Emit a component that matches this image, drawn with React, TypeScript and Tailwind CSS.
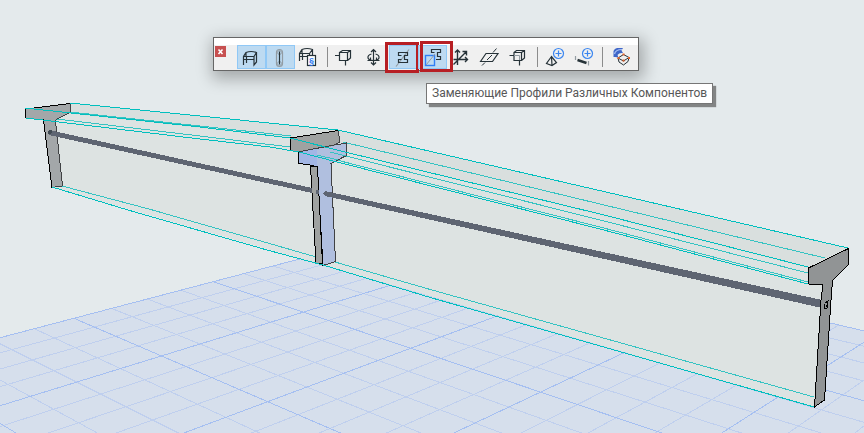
import { ReactNode } from "react";

interface ToolButtonProps {
  label: string;
  selected?: boolean;
  markClass?: string;
  children: ReactNode;
}

// Floor plane: one unit is a bold grid cell, split into four minor cells
const project = (u: number, v: number) => {
  const w = 1 + 0.10988 * u - 0.08878 * v;
  const x = (162.74 * u + 73.085 * v + 74) / w;
  const y = (-5.65 * u + 6.035 * v + 318.3) / w;
  return `${x.toFixed(1)} ${y.toFixed(1)}`;
};

const FLOOR = { uMin: -2, uMax: 3, vMin: 0, vMax: 6 };

const gridPath = (bold: boolean) => {
  const parts: string[] = [];
  for (let i = FLOOR.uMin * 4; i <= FLOOR.uMax * 4; i++) {
    if ((i % 4 === 0) === bold) {
      parts.push(`M${project(i / 4, FLOOR.vMin)}L${project(i / 4, FLOOR.vMax)}`);
    }
  }
  for (let i = FLOOR.vMin * 4; i <= FLOOR.vMax * 4; i++) {
    if ((i % 4 === 0) === bold) {
      parts.push(`M${project(FLOOR.uMin, i / 4)}L${project(FLOOR.uMax, i / 4)}`);
    }
  }
  return parts.join("");
};

const floorPath = `M${project(-2, 0)}L${project(3, 0)}L${project(3, 6)}L${project(-2, 6)}Z`;

const Scene = () => (
  <svg
    className="block h-auto w-full"
    viewBox="0 0 864 433"
    fill="none"
    shapeRendering="crispEdges"
    role="img"
    aria-label="3D"
  >
    <path d={floorPath} fill="#d6dfec" />
    <path d={gridPath(false)} stroke="#bfcfee" />
    <path d={gridPath(true)} stroke="#a5bff1" />

    {/* beam body */}
    <path d="M26 109L70 103L338 130L848 248L824 300L814 407L323 265L52 187L44 120L26 118Z" fill="#dde3e2" />
    <path d="M26 109L70 103L338 130L848 248L808 268L345 152L290 138Z" fill="#d9dfde" />
    <g stroke="#35c3c2">
      <path d="M70 112L200 126L291 136" />
      <path d="M57 119L200 136L298 148" />
      <path d="M62 186L149 209L292 250L316 257" />
      <path d="M343 142L600 204L825 258" />
      <path d="M330 152L600 220L808 273" />
      <path d="M317 155L600 227L808 282" />
      <path d="M335 262L432 290L814 397" />
    </g>

    {/* left section */}
    <path d="M25.500 109L70.500 103.500L71 112L57 119L55.500 121L62.500 186L52 187.500L43.500 120L26 118Z" fill="#a3a7a9" />
    <path d="M70.500 103.500L71 112L57 119L55.500 121L62.500 186L52 187.500" stroke="#404244" />
    <path d="M70.500 103.500L25.500 109L26 118M36 119L43.500 120L52 187.500" stroke="#000" />

    {/* middle sections */}
    <path d="M298.500 151.500L346.500 143V155.500L331 163.500L335.500 261.500L323 265.500L317.500 167L308 164.500L298.500 163.500Z" fill="#b0bfdf" />
    <path d="M298.500 151.500L317 148V167L308 164.500L298.500 163.500Z" fill="#a2b6e5" />
    <path d="M298.500 151.500L346.500 143V155.500L331 163.500L335.500 261.500L323 265.500" stroke="#404244" />
    <path d="M290.500 138L338.500 130.500L339.500 142L334 146L298 152L290.500 150Z" fill="#9fa2a1" />
    <path d="M338.500 130.500L339.500 142L334 145L298 152" stroke="#404244" />
    <path d="M338.500 130.500L290.500 138V150.500L298 152" stroke="#000" />
    <path d="M310.500 166L317.500 167L322.500 263L316 263.500Z" fill="#9fa2a1" stroke="#000" />
    <path d="M298.500 151.500V163.500L308 164.500L317.500 167L320 215L323 265.500" stroke="#000" />
    <path d="M317 155L338 160M330 152L346 156" stroke="#35c3c2" />

    {/* reinforcement rods */}
    <path d="M49 130L312 188V193L49 135Z" fill="#5e6572" />
    <path d="M316 190H319V194H316Z" fill="#5e6572" />
    <path d="M325 191L822 300V308L325 196L323 193Z" fill="#5e6572" />
    <circle cx="50" cy="132" r="2" fill="#404a52" />

    <g stroke="#00bfbe">
      <path d="M70 103L200 116L338 130L848 248" />
      <path d="M25 108L200 127L290 138L345 152L600 214L808 267" />
      <path d="M26 118L200 139L270 147L299 152L337 162L600 229L808 284" />
      <path d="M52 187L128 210L267 250L323 265L432 298L814 407" />
    </g>

    {/* right section */}
    <path
      d="M808.500 268L848.500 248.500L848 265L832.500 280.500L831 300L824.500 400L814.500 407L821 300L823 284.500L808.500 284Z"
      fill="#919495"
      stroke="#000"
    />
    <path d="M825 303L828 301L827 308L824 309V304M826 305V307" stroke="#000" />
  </svg>
);

const ToolButton = ({ label, selected, markClass, children }: ToolButtonProps) => (
  <button
    type="button"
    aria-label={label}
    aria-pressed={selected}
    className={
      selected
        ? "relative h-6 w-[29px] bg-[#bddaf1] outline outline-1 -outline-offset-1 outline-[#90c8f6]"
        : "relative h-6 w-[29px]"
    }
  >
    <svg className="block h-6 w-[29px]" viewBox="0 0 29 24" fill="none" stroke="#263238" strokeWidth="1.2">
      {children}
    </svg>
    {markClass && <span className={markClass} />}
  </button>
);

const Separator = () => <span className="mx-[3px] mt-0.5 h-5 w-px bg-[#8c8c8c]" />;

const Toolbar = () => (
  <div
    role="toolbar"
    className="absolute left-[213px] top-[37px] w-[426px] border border-[#666] bg-white pt-[7px] shadow-[2px_5px_16px_3px_rgba(0,0,0,0.28)]"
  >
    <div className="flex h-[25px] items-start bg-[#f0f0f0] pl-px">
      <button
        type="button"
        aria-label="Закрыть"
        className="mr-[11px] mt-px flex h-[11px] w-[11px] items-center justify-center bg-[#c75050]"
      >
        <svg className="h-[7px] w-[7px]" viewBox="0 0 7 7" stroke="#fff" strokeWidth="1.6">
          <path d="M1.500 1.500L5.500 6M5.500 1.500L1.500 6" />
        </svg>
      </button>

      <ToolButton label="Балка" selected>
        <path d="M6.500 20V11.500L9 7.500Q14 5.500 19.500 7.500V17L17 20V11.500H6.500M17 11.500L19.500 7.500M6.500 14.500H17M9.500 11.500V18M9 7.500V11" />
      </ToolButton>
      <ToolButton label="Колонна" selected>
        <rect x="10.500" y="4.500" width="6" height="17" rx="3" stroke="#929ca3" />
        <circle cx="13.500" cy="7.500" r="2" stroke="#929ca3" strokeWidth="0.800" />
        <circle cx="13.500" cy="18.500" r="2" stroke="#929ca3" strokeWidth="0.800" />
        <path d="M13.500 6.500V19.500" />
      </ToolButton>
      <ToolButton label="Параметры">
        <path d="M4.500 16V8.500L7 4.500Q12 2.500 17.500 4.500V10M4.500 8.500H14.500L17.500 4.500M14.500 8.500V11M4.500 11.500H12M7.500 8.500V15M7 4.500V8" />
        <rect x="12.500" y="10.500" width="8" height="10" fill="#fff" />
        <text x="16.500" y="18.500" textAnchor="middle" fontFamily="Liberation Sans, sans-serif" fontSize="9" fontWeight="700" fill="#2f7bf0" stroke="none">
          §
        </text>
      </ToolButton>

      <Separator />

      <ToolButton label="Начало">
        <path d="M4 10.500H9M8.500 7.500H16.500V15.500H8.500ZM8.500 7.500L11.500 5.500H19.500V13L16.500 15.500M16.500 7.500L19.500 5.500M14.500 15.500V20.500" />
      </ToolButton>
      <ToolButton label="Вращение">
        <path d="M13.500 5V20M11 7L13.500 4.500L16 7M11 17.500L13.500 20L16 17.500M11.500 9Q7.500 10 8 13Q9 15.500 13.500 15.500Q18 15.500 19 13Q19.500 10 15.500 9M7.500 15.500L10.500 15.500V12.500M19.500 15.500L16.500 15.500V12.500" />
      </ToolButton>
      <ToolButton
        label="Профиль"
        selected
        markClass="absolute -left-1 -top-[3px] h-[31px] w-[34px] border-[3px] border-[#b71f24]"
      >
        <path d="M7 21.500L20 4.500" stroke="#939ca2" />
        <path d="M12.500 10.500H9.500V7.500H18.500V10.500H15.500V14.500H18.500V17.500H9.500V14.500H12.500" />
      </ToolButton>
      <ToolButton
        label="Заменяющие Профили"
        selected
        markClass="absolute left-0.5 -top-1 z-10 h-[31px] w-[33px] border-[3px] border-[#b71f24]"
      >
        <path d="M16.500 7.500H13.500V4.500H22.500V7.500H19.500V11.500H22.500V14.500H18" />
        <rect x="7.500" y="10.500" width="9" height="10" stroke="#2f7ff7" strokeWidth="1.400" />
        <path d="M8 20L17 9" stroke="#939ca2" strokeWidth="1" />
      </ToolButton>
      <ToolButton label="Оси">
        <path d="M10.500 20V5M8 7.500L10.500 5L13 7.500M6.500 14.500H20.500M18 12L20.500 14.500L18 17M6.500 19.500L19 7M15.500 6.500H19.500V10.500" strokeWidth="1.400" />
      </ToolButton>
      <ToolButton label="Плоскость">
        <path d="M4.500 16.500L10 8.500H22L16.500 16.500Z" />
        <path d="M6 20.500L9 17.500M11 15L16 10M17 7.500L20.500 3.500" strokeWidth="1" />
      </ToolButton>
      <ToolButton label="Узел">
        <path d="M9 7.500H16.500V15.500H9ZM9 7.500L11.500 5.500H19.500V13L16.500 15.500M16.500 7.500L19.500 5.500M4.500 10.500H9M14.500 15.500V20.500" />
        <path d="M9 10.500H14.500V15" stroke="#939ca2" strokeWidth="1" />
      </ToolButton>

      <Separator />

      <ToolButton label="Добавить сечение">
        <path d="M10.500 11.500L5.500 18.500L11 20.500L15.500 17.500ZM10.500 11.500L11 20.500" />
        <circle cx="17.500" cy="8.500" r="5" stroke="#3b86f0" />
        <path d="M17.500 5.500V11.500M14.500 8.500H20.500" stroke="#3b86f0" />
      </ToolButton>
      <ToolButton label="Добавить сегмент">
        <path d="M5.500 11V15M18.500 16V20.500" stroke="#939ca2" />
        <path d="M7.500 15L16.500 18" strokeWidth="2.400" />
        <circle cx="17.500" cy="8.500" r="5" stroke="#3b86f0" />
        <path d="M17.500 5.500V11.500M14.500 8.500H20.500" stroke="#3b86f0" />
      </ToolButton>

      <Separator />

      <ToolButton label="Модификация">
        <path d="M7.500 12V6Q8.500 3.500 11 3H17L15.500 5.500L17 8Q13 7.500 11.500 10L12.500 12.500L9 12Z" fill="#3f66c8" stroke="none" />
        <path d="M8.500 9Q9.500 4.500 16 4.500" stroke="#a9c1f5" />
        <path d="M12 13L17.500 9.500L23 12.500L17.500 16ZM12 13L13 17L17.500 20L22 16.500L23 12.500" fill="#eee" strokeWidth="1" />
        <path d="M16.500 8.500H18.500V10.500H16.500ZM11.500 12H13.500V14H11.500ZM22 12H24V14H22ZM16.500 14.500H18.500V16.500H16.500Z" fill="#e0622c" stroke="none" />
      </ToolButton>
    </div>
  </div>
);

const App = () => (
  <main className="relative min-h-screen overflow-hidden bg-[#e4eaec]">
    <Scene />
    <Toolbar />
    <div
      role="tooltip"
      className="absolute left-[426px] top-[83px] whitespace-nowrap border border-[#767676] bg-white px-[5px] pb-px font-[Roboto,sans-serif] text-xs leading-[18px] text-[#575757] shadow-[3px_3px_1px_0_rgba(90,90,90,0.7)]"
    >
      Заменяющие Профили Различных Компонентов
    </div>
  </main>
);

export default App;
